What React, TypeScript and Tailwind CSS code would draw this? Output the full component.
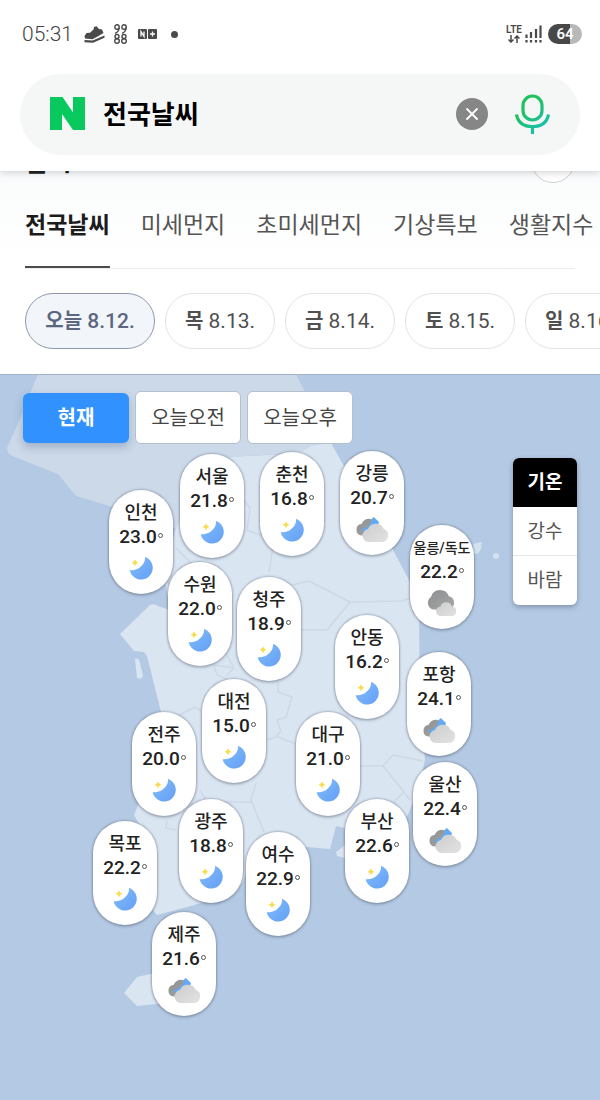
import React from 'react';

type Sky = 'moon' | 'cloudyNight' | 'overcast';

interface City {
  name: string;
  temp: string;
  sky: Sky;
  x: number;
  y: number;
}

// x is the centre of the pin and y its top, both in map units
const MAP_WIDTH = 600;
const MAP_HEIGHT = 726;

const CITIES: City[] = [
  { name: '서울', temp: '21.8', sky: 'moon', x: 212, y: 80 },
  { name: '춘천', temp: '16.8', sky: 'moon', x: 292, y: 78 },
  { name: '강릉', temp: '20.7', sky: 'cloudyNight', x: 372, y: 77 },
  { name: '인천', temp: '23.0', sky: 'moon', x: 141, y: 116 },
  { name: '울릉/독도', temp: '22.2', sky: 'overcast', x: 442, y: 151 },
  { name: '수원', temp: '22.0', sky: 'moon', x: 200, y: 188 },
  { name: '청주', temp: '18.9', sky: 'moon', x: 269, y: 203 },
  { name: '안동', temp: '16.2', sky: 'moon', x: 367, y: 241 },
  { name: '포항', temp: '24.1', sky: 'cloudyNight', x: 439, y: 278 },
  { name: '대전', temp: '15.0', sky: 'moon', x: 234, y: 305 },
  { name: '전주', temp: '20.0', sky: 'moon', x: 164, y: 338 },
  { name: '대구', temp: '21.0', sky: 'moon', x: 328, y: 338 },
  { name: '울산', temp: '22.4', sky: 'cloudyNight', x: 445, y: 388 },
  { name: '광주', temp: '18.8', sky: 'moon', x: 211, y: 425 },
  { name: '부산', temp: '22.6', sky: 'moon', x: 377, y: 425 },
  { name: '목포', temp: '22.2', sky: 'moon', x: 125, y: 447 },
  { name: '여수', temp: '22.9', sky: 'moon', x: 278, y: 458 },
  { name: '제주', temp: '21.6', sky: 'cloudyNight', x: 184, y: 538 },
];

const TABS = ['전국날씨', '미세먼지', '초미세먼지', '기상특보', '생활지수'];

const DAYS = [
  { day: '오늘', date: '8.12.' },
  { day: '목', date: '8.13.' },
  { day: '금', date: '8.14.' },
  { day: '토', date: '8.15.' },
  { day: '일', date: '8.16.' },
];

const PERIODS = ['현재', '오늘오전', '오늘오후'];
const LAYERS = ['기온', '강수', '바람'];

const SkyIcon: React.FC<{ sky: Sky }> = ({ sky }) => {
  if (sky === 'moon') {
    return (
      <svg className="w-6 h-6" viewBox="0 0 24 24">
        <path d="M16 .8A11.700 11.700 0 1 1 .6 14.200C8.500 15.500 17 8.500 16 .8Z" fill="url(#moon)" />
        <path d="M6 3.800L7.100 5.800L9 6.800L7.100 7.800L6 9.800L4.900 7.800L3 6.800L4.900 5.800Z" fill="#f8dc4e" stroke="#f8dc4e" strokeWidth=".5" />
      </svg>
    );
  }
  if (sky === 'cloudyNight') {
    return (
      <svg className="w-[34px] h-7" viewBox="0 0 34 28">
        <path d="M6.500 20.500a5.800 5.800 0 0 1 0-11.500A8 8 0 0 1 19 5.500l3 7L11 20.500Z" fill="url(#back)" />
        <path d="M6.500 14C12 13.500 16.500 9 17.200 3.200L18.800 2L24 7L22 14L10 19Z" fill="#62aaf5" />
        <path d="M13.500 27a6.500 6.500 0 0 1-.5-12.900 8.500 8.500 0 0 1 15.600-.3A6.800 6.800 0 0 1 27 27Z" fill="url(#front)" />
      </svg>
    );
  }
  return (
    <svg className="w-[34px] h-7" viewBox="0 0 34 28">
      <path d="M8 20.500A7 7 0 0 1 6 8a9.300 9.300 0 0 1 17.800-.7A6.800 6.800 0 0 1 24 20.500Z" fill="url(#back)" />
      <path d="M16 27a4.800 4.800 0 0 1-.5-9.600 6 6 0 0 1 11.300-.2A5 5 0 0 1 27.500 27Z" fill="url(#front)" />
    </svg>
  );
};

const CityPin: React.FC<{ city: City }> = ({ city }) => (
  <button
    className="absolute -translate-x-1/2 w-16 h-[104px] pt-[11px] rounded-full bg-white flex flex-col items-center shadow-[0_0_2px_1px_rgba(90,100,120,0.4),0_2px_3px_rgba(60,70,90,0.2)] text-[#222]"
    style={{ left: `${(city.x / MAP_WIDTH) * 100}%`, top: `${(city.y / MAP_HEIGHT) * 100}%` }}
  >
    <span
      className={
        city.name.length > 2
          ? 'text-sm leading-6 font-medium whitespace-nowrap'
          : 'text-lg leading-6 font-medium whitespace-nowrap'
      }
    >
      {city.name}
    </span>
    <span className="flex gap-px text-[19px] leading-6 font-medium">
      {city.temp}
      <span className="mt-2 w-[5px] h-[5px] rounded-full border border-[#555]"></span>
    </span>
    <span className="h-[38px] flex items-center">
      <SkyIcon sky={city.sky} />
    </span>
  </button>
);

const KoreaMap: React.FC = () => (
  <svg className="w-full h-full" viewBox="0 374 600 726" aria-hidden="true">
    <defs>
      <linearGradient id="moon" x1="0" y1="0" x2="1" y2="1">
        <stop offset="0" stopColor="#82bdfb" />
        <stop offset="1" stopColor="#649ff6" />
      </linearGradient>
      <linearGradient id="back" x1="0" y1="0" x2="1" y2="1">
        <stop offset="0" stopColor="#8d9091" />
        <stop offset="1" stopColor="#a6a6a6" />
      </linearGradient>
      <linearGradient id="front" x1="0" y1="0" x2="1" y2="1">
        <stop offset="0" stopColor="#cdcdcf" />
        <stop offset="1" stopColor="#e2e2e2" />
      </linearGradient>
    </defs>
    <path
      d="M38 374L22 414L7 448Q7 453 12 456L58 474L76 496L110 506L180 530L231 457L292 453L336 454L296 374Z"
      fill="#cbd9e9"
    />
    <path
      d="M175 530L200 485L231 457L300 453L311 446L331 443L345 468L392 548L410 582L419 612L420 700L425 760L418 790L409 812L395 840L336 826L330 849L307 847L250 862L243 882L236 892L191 906L157 915L152 909L148 840L134 815L139 803L166 790L161 712L147 656L144 652L134 651L120 634L150 605Q154 603 158 606L170 610L165 580Z"
      fill="#dae5f2"
    />
    <path d="M135 659Q139 657 140 663L143 676Q141 680 137 678Z" fill="#dae5f2" />
    <path d="M124 993L137 977L155 973L186 972L186 1001L137 1006Z" fill="#dae5f2" />
    <path d="M473 544L482 542L481 549Q478 556 473 553Z" fill="#d2e3ef" />
    <circle cx="496" cy="556" r="3" fill="#d2e3ef" />
    <path d="M336 852L345 845V858L337 856Z" fill="#dae5f2" />
    <g fill="none" stroke="#cdd9e6" strokeWidth="1.500" strokeLinejoin="round">
      <path d="M292 585L309 581L350 602L402 601L415 596" />
      <path d="M350 602L327 630L301 630" />
      <path d="M244 500L250 508L247 530L274 540L269 572" />
      <path d="M176 548L190 562L206 570M175 590L166 580" />
      <path d="M224 650L234 668L214 665M234 668L226 676M214 665L217 675L229 680" />
      <path d="M278 682V692L292 697L286 717L277 720L281 731L276 737L267 740M278 737L296 744" />
      <path d="M162 724L195 707L203 712" />
      <path d="M256 783L251 800L264 832M200 790L207 802H251" />
      <path d="M359 766H383L393 755L423 761M383 766L404 792L410 800M404 792L390 806" />
      <path d="M167 820L166 828L176 830" />
    </g>
    <path d="M0 374.500H600" stroke="#a3b2c6" />
  </svg>
);

const StatusBar: React.FC = () => (
  <div className="h-[68px] px-[18px] flex items-center justify-between text-[#4a4a4a]">
    <div className="flex items-center pl-1">
      <span className="text-[21px] leading-6 w-[52px] font-light text-[#444]">05:31</span>
      <svg className="ml-[10px] w-[21px] h-[17px]" viewBox="0 0 21 17" fill="currentColor">
        <path d="M.5 10L2.500 7L6 6.800L9.500 3.500L10 1L12.500 .2L15 3L18 3.500L19.500 7L14.500 10L8.500 13.200L1 12.600Z" />
        <path d="M.5 14L8.600 14.600L20.500 9.500V11.800L9 16.800L.5 16.200Z" />
      </svg>
      <svg className="ml-2 w-[15px] h-5" viewBox="0 0 15 20" fill="none" stroke="currentColor" strokeWidth="1.400">
        <circle cx="4" cy="3" r="2.200" />
        <circle cx="11" cy="3" r="2.200" />
        <path d="M6.200 3.500C6 6.500 4.500 8.500 2 9.300M13.200 3.500C13 6.500 11.500 8.500 9 9.300" />
        <circle cx="4" cy="12.500" r="2" />
        <circle cx="11" cy="12.500" r="2" />
        <circle cx="4" cy="17" r="2.300" />
        <circle cx="11" cy="17" r="2.300" />
      </svg>
      <svg className="ml-[10px] w-[19px] h-[10px]" viewBox="0 0 19 10">
        <rect width="9" height="10" rx="1" fill="currentColor" />
        <rect x="10" width="9" height="10" rx="1" fill="currentColor" />
        <path d="M3 7.500V2.500L6 7.500V2.500M12 5H17M14.500 2.500V7.500" fill="none" stroke="#fff" strokeWidth="1.300" />
      </svg>
      <span className="ml-[14px] w-[7px] h-[7px] rounded-full bg-current"></span>
    </div>
    <div className="flex items-center gap-[3px]">
      <div className="flex flex-col items-center">
        <span className="text-[10px] leading-[10px] font-semibold">LTE</span>
        <svg className="w-3 h-2" viewBox="0 0 12 8" fill="none" stroke="currentColor" strokeWidth="1.500">
          <path d="M3 0V7M.5 4.500L3 7L5.500 4.500M9 8V1M6.500 3.500L9 1L11.500 3.500" />
        </svg>
      </div>
      <svg className="w-[17px] h-[18px]" viewBox="0 0 17 18" stroke="currentColor" strokeWidth="2.200">
        <path d="M1.500 9.500V13M6 7V13M11 4V13M15.500 .5V13" />
        <path d="M1.500 15V17.500M6 15V17.500M11 15V17.500M15.500 15V17.500" />
      </svg>
      <span className="ml-[3px] w-[34px] h-5 rounded-full bg-linear-to-r from-[#484848] from-64% to-[#b8b8b8] to-64% text-white text-[15px] leading-5 font-semibold text-center">
        64
      </span>
    </div>
  </div>
);

const SearchHeader: React.FC = () => (
  <header className="relative z-10 bg-white pb-4 shadow-[0_1px_8px_rgba(0,0,0,0.2)]">
    <StatusBar />
    <div className="px-5 pt-1.5">
      <form className="h-[81px] px-[30px] pb-0.5 rounded-full bg-[#f5f6f6] flex items-center">
        <svg className="w-[35px] h-[33px] shrink-0" viewBox="0 0 35 33" fill="#07c95d">
          <path d="M0 0H12.500L23 15.500V0H35V33H23L12 17V33H0Z" />
        </svg>
        <input
          className="ml-[18px] flex-1 min-w-0 h-10 pb-0.5 bg-transparent text-[26px] font-bold text-black outline-none"
          type="text"
          aria-label="검색어"
          defaultValue="전국날씨"
        />
        <button type="button" aria-label="지우기" className="w-8 h-8 shrink-0 rounded-full bg-[#868686] flex items-center justify-center">
          <svg className="w-3 h-3" viewBox="0 0 12 12" stroke="#fff" strokeWidth="1.800" strokeLinecap="round">
            <path d="M1 1L11 11M11 1L1 11" />
          </svg>
        </button>
        <button type="button" aria-label="음성 검색" className="ml-[27px] shrink-0">
          <svg className="w-[35px] h-10" viewBox="0 0 35 40" fill="none" strokeWidth="3.200">
            <defs>
              <linearGradient id="mic" gradientUnits="userSpaceOnUse" x1="0" y1="0" x2="35" y2="40">
                <stop offset="0.35" stopColor="#1fc25f" />
                <stop offset="1" stopColor="#16bfc8" />
              </linearGradient>
            </defs>
            <rect x="8" y="2" width="19" height="24" rx="9.500" stroke="url(#mic)" />
            <path d="M1.500 20.500C3 28.500 9 32.500 17.500 32.500S32 28.500 33.500 20.500M17.500 32V40" stroke="url(#mic)" />
          </svg>
        </button>
      </form>
    </div>
  </header>
);

const App: React.FC = () => {
  return (
    <div className="w-full overflow-hidden bg-white font-['Roboto','Noto_Sans_CJK_KR',sans-serif]">
      <SearchHeader />

      <main>
        <div className="h-3 px-[25px] flex items-end justify-between overflow-hidden bg-[#fafbfc]">
          <h1 className="text-[25px] leading-10 font-bold text-[#222]">날씨</h1>
          <button aria-label="더보기" className="w-[44px] h-[44px] rounded-full border border-[#ccd0d4] bg-white shrink-0"></button>
        </div>

        <nav className="px-[25px] h-[85px] flex gap-[31px] whitespace-nowrap text-[23px] text-[#555] bg-linear-to-b from-[#fbfcfc] to-white">
          {TABS.map((tab, i) => (
            <a
              key={tab}
              href="#"
              className={
                i === 0
                  ? 'pt-1 flex items-center font-bold text-[#1c1c1c] border-b-2 border-[#4c4c4c]'
                  : 'pt-1 flex items-center border-b-2 border-transparent'
              }
            >
              {tab}
            </a>
          ))}
        </nav>
        <hr className="mx-[25px] border-[#ececec]" />

        <div className="px-[25px] pt-6 pb-[25px] flex gap-[10px] whitespace-nowrap text-[21px] text-[#505050]">
          {DAYS.map(({ day, date }, i) => (
            <button
              key={day}
              className={
                i === 0
                  ? 'shrink-0 h-14 w-[130px] pt-0.5 rounded-full border border-[#8d97ae] bg-[#f2f6fb] font-medium text-[#5c677f]'
                  : 'shrink-0 h-14 w-[110px] pt-0.5 rounded-full border border-[#e4e4e4] bg-white'
              }
            >
              <span className="text-xl font-bold">{day}</span> {date}
            </button>
          ))}
        </div>

        <section className="relative aspect-[600/726] bg-[#b4c9e3]">
          <KoreaMap />
          {CITIES.map((city) => (
            <CityPin key={city.name} city={city} />
          ))}

          <div className="absolute left-[23px] top-[17px] flex items-center gap-1.5 text-xl">
            {PERIODS.map((period, i) => (
              <button
                key={period}
                className={
                  i === 0
                    ? 'w-[106px] h-[50px] rounded-md bg-[#3191ff] text-white font-bold shadow-[0_4px_8px_rgba(60,80,120,0.3)]'
                    : 'w-[106px] h-[53px] rounded-md bg-white text-[#444] border border-[#b5bfcd]'
                }
              >
                {period}
              </button>
            ))}
          </div>

          <div className="absolute right-[23px] top-[84px] w-16 rounded-md overflow-hidden bg-white flex flex-col text-[19px] shadow-[0_2px_5px_rgba(50,60,90,0.4)]">
            {LAYERS.map((layer, i) => (
              <button
                key={layer}
                className={
                  i === 0
                    ? 'h-[49px] pt-0.5 bg-black text-white font-bold'
                    : 'h-[49px] pt-0.5 text-[#555] border-b border-[#e6e6e6] last:border-b-0'
                }
              >
                {layer}
              </button>
            ))}
          </div>
        </section>
      </main>
    </div>
  );
};

export default App;
